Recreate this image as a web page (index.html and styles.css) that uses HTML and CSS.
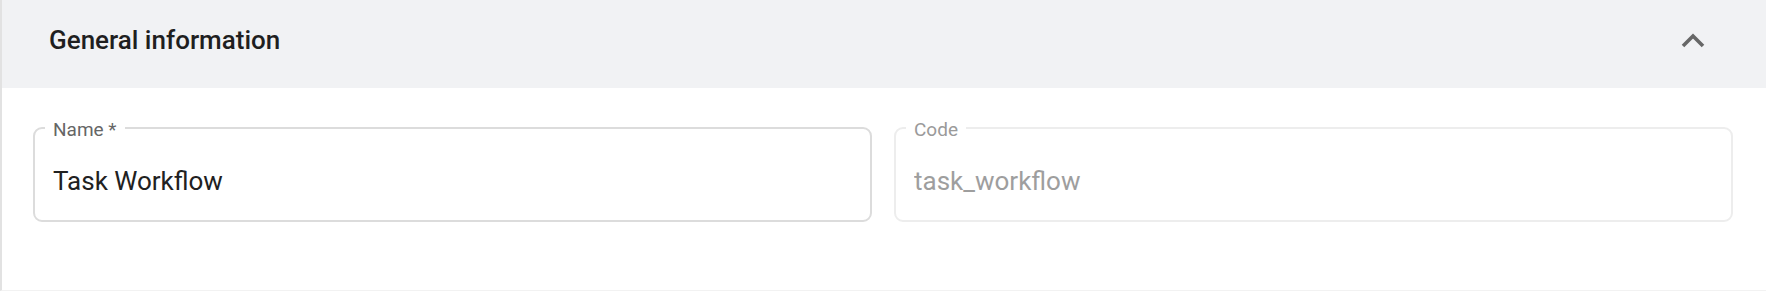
FILE: index.html
```html
<!DOCTYPE html>
<html lang="en">
<head>
    <meta charset="UTF-8">
    <meta name="viewport" content="width=device-width, initial-scale=1.0">
    <title>General information</title>
    <link rel="stylesheet" href="styles.css">
</head>
<body>
    <div class="panel">
        <div class="panel-header">
            <h2>General information</h2>
            <span class="toggle">
                <svg width="24" height="16" viewBox="0 0 24 16">
                    <path d="M2 14 L12 4 L22 14" fill="none" stroke="#676767" stroke-width="3.6"/>
                </svg>
            </span>
        </div>
        <div class="panel-body">
            <fieldset class="field">
                <legend>Name *</legend>
                <input type="text" value="Task Workflow">
            </fieldset>
            <fieldset class="field disabled">
                <legend>Code</legend>
                <input type="text" value="task_workflow" disabled>
            </fieldset>
        </div>
    </div>
</body>
</html>
```

FILE: styles.css
```css
body {
    margin: 0;
    font-family: Roboto, "Liberation Sans", sans-serif;
    background-color: #fff;
}
.panel {
    border-left: 2px solid #e2e2e2;
    border-bottom: 1px solid #f2f2f2;
    height: 291px;
    box-sizing: border-box;
}
.panel-header {
    display: flex;
    align-items: center;
    justify-content: space-between;
    height: 88px;
    padding: 0 61px 8px 47px;
    box-sizing: border-box;
    background-color: #f1f2f4;
}
.panel-header h2 {
    margin: 0;
    font-size: 26px;
    font-weight: 500;
    color: #1f1f1f;
}
.toggle {
    display: flex;
}
.panel-body {
    display: grid;
    grid-template-columns: 1fr 1fr;
    gap: 22px;
    padding: 26px 33px 0 31px;
}
.field {
    margin: 0;
    padding: 0 10px 23px 10px;
    border: 2px solid #dcdcdc;
    border-radius: 9px;
    min-width: 0;
}
.field legend {
    padding: 5px 8px 0;
    font-size: 19px;
    line-height: 22px;
    color: #666;
}
.field input {
    display: block;
    width: 100%;
    box-sizing: border-box;
    margin-top: 24px;
    padding: 0 8px;
    border: none;
    outline: none;
    background: transparent;
    font-family: Roboto, "Liberation Sans", sans-serif;
    font-size: 26px;
    line-height: 32px;
    height: 32px;
    color: #212121;
}
.field.disabled {
    border-color: #ededed;
}
.field.disabled legend {
    color: #9a9a9a;
}
.field.disabled input {
    color: #9e9e9e;
}
```
